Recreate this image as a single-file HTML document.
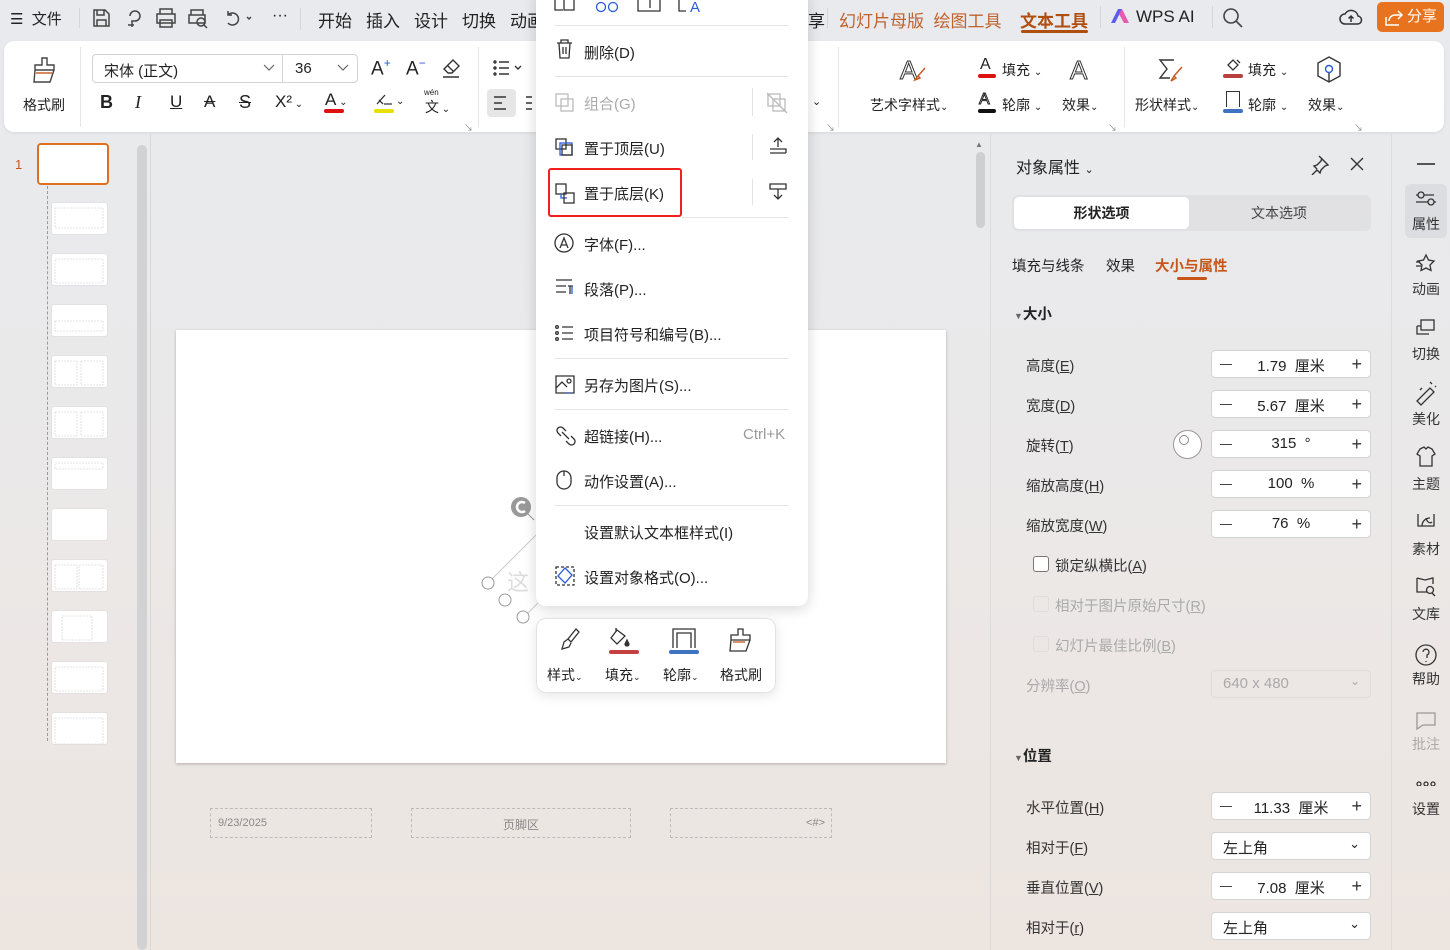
<!DOCTYPE html>
<html><head><meta charset="utf-8">
<style>
*{margin:0;padding:0;box-sizing:border-box}
body{width:1450px;height:950px;overflow:hidden;position:relative;font-family:"Liberation Sans","Noto Sans CJK SC",sans-serif;color:#222;background:linear-gradient(180deg,#e8eaee 0%,#eae9ea 40%,#ede5e0 100%)}
.a{position:absolute;white-space:nowrap}
.t{font-size:15px}
.s{font-size:14px}
.sep{position:absolute;height:1px;background:#e3e3e3}
.vd{position:absolute;width:1px;background:#d6d6d6}
.spin{position:absolute;left:1211px;width:160px;height:28px;background:#fff;border:1px solid #d4d4d4;border-radius:4px;font-size:15px}
.spin .m{position:absolute;left:8px;top:4px;width:12px;height:1px;background:#444;top:13px}
.spin .p{position:absolute;right:8px;top:3px;font-size:18px;line-height:20px;color:#333}
.spin .v{position:absolute;left:0;right:0;top:4px;text-align:center}
.lbl{position:absolute;left:1026px;font-size:14.5px;color:#333}
.cb{position:absolute;left:1033px;width:16px;height:16px;border:1.5px solid #777;border-radius:3px;background:#fff}
.rb{position:absolute;left:1405px;width:42px;text-align:center;font-size:14px;color:#333}
.thumb{position:absolute;left:52px;width:55px;height:31px;background:#fff;border-radius:2px;box-shadow:0 0 1px #bbb}
.tab{position:absolute;top:7px;font-size:17px}
</style></head><body>

<!-- top bar -->
<div class="a t" style="left:10px;top:8px">☰&nbsp; 文件</div>
<div class="vd" style="left:79px;top:8px;height:20px"></div>
<svg class="a" style="left:90px;top:6px" width="250" height="24" fill="none" stroke="#444" stroke-width="1.5">
<path d="M4 4h11l4 4v12H4z M7 4v5h7V4 M7 20v-6h9v6"/>
<path d="M40 10a5 5 0 1 1 5 5h-3v6 M38 19h6"/>
<path d="M70 8V3h12v5 M67 8h18v9H67z M70 14h12v7H70z"/>
<path d="M101 9V4h12v5 M99 9h16v8H99z"/><circle cx="111" cy="16" r="4"/><path d="M114 19l3 3"/>
<path d="M138 9a6 6 0 1 1 0 8 M138 5v4h4"/><path d="M157 11l2 2 2-2"/>
</svg>
<div class="a" style="left:272px;top:7px;font-size:16px">···</div>
<div class="vd" style="left:300px;top:8px;height:22px"></div>
<div class="tab" style="left:318px">开始</div>
<div class="tab" style="left:366px">插入</div>
<div class="tab" style="left:414px">设计</div>
<div class="tab" style="left:462px">切换</div>
<div class="tab" style="left:510px">动画</div>
<div class="a" style="left:808px;top:7px;font-size:17px">享</div>
<div class="vd" style="left:827px;top:8px;height:20px"></div>
<div class="a" style="left:839px;top:7px;font-size:17px;color:#c0622c">幻灯片母版&nbsp; 绘图工具</div>
<div class="a" style="left:1020px;top:7px;font-size:17px;color:#b04e10;font-weight:bold">文本工具</div>
<div class="a" style="left:1021px;top:30px;width:67px;height:3px;background:#b04e10;border-radius:2px"></div>
<div class="vd" style="left:1100px;top:6px;height:22px"></div>
<svg class="a" style="left:1110px;top:8px" width="20" height="16"><path d="M1 15L8 1h4l-7 14z" fill="#5b5cf0"/><path d="M9 6l3-5 7 14h-5z" fill="#e75ab0"/></svg>
<div class="a" style="left:1136px;top:7px;font-size:17px">WPS AI</div>
<div class="vd" style="left:1212px;top:6px;height:22px"></div>
<svg class="a" style="left:1222px;top:7px" width="22" height="22" fill="none" stroke="#444" stroke-width="1.6"><circle cx="9" cy="9" r="7"/><path d="M14 14l6 6"/></svg>
<svg class="a" style="left:1339px;top:6px" width="24" height="22" fill="none" stroke="#333" stroke-width="1.5"><path d="M6 18a5 5 0 0 1 0-10a7 7 0 0 1 13 2a4 4 0 0 1-1 8z"/><path d="M12 16v-6 M9.5 12.5L12 10l2.5 2.5"/></svg>
<div class="a" style="left:1377px;top:2px;width:67px;height:30px;background:#e8731f;border-radius:5px;color:#fff;font-size:15px;line-height:30px;padding-left:30px">分享</div>
<svg class="a" style="left:1384px;top:8px" width="20" height="18" fill="none" stroke="#fff" stroke-width="1.5"><path d="M14 3l4 4-4 4 M18 7h-7a6 6 0 0 0-6 6 M2 9v8h13"/></svg>

<!-- ribbon -->
<div class="a" style="left:4px;top:41px;width:1440px;height:91px;background:#fff;border-radius:10px;box-shadow:0 1px 3px rgba(0,0,0,.08)"></div>
<svg class="a" style="left:32px;top:56px" width="26" height="28" fill="none" stroke="#444" stroke-width="1.4"><path d="M10 2h5v7h7v5H3V9h7z M3 14l-1 12h16l4-12"/><path d="M4 17h16" stroke="#c8561a"/></svg>
<div class="a s" style="left:23px;top:95px">格式刷</div>
<div class="vd" style="left:80px;top:47px;height:80px;background:#e5e5e5"></div>
<div class="a" style="left:92px;top:54px;width:266px;height:29px;border:1px solid #d4d4d4;border-radius:4px"></div>
<div class="vd" style="left:282px;top:54px;height:29px"></div>
<div class="a t" style="left:104px;top:60px">宋体 (正文)</div>
<div class="a t" style="left:295px;top:60px">36</div>
<svg class="a" style="left:262px;top:62px" width="90" height="12" fill="none" stroke="#666" stroke-width="1.2"><path d="M2 3l5 5 5-5 M76 3l5 5 5-5"/></svg>
<div class="a" style="left:371px;top:56px;font-size:19px">A<sup style="color:#2a5bd7;font-size:12px">+</sup></div>
<div class="a" style="left:406px;top:56px;font-size:19px">A<sup style="color:#2a5bd7;font-size:12px">−</sup></div>
<svg class="a" style="left:440px;top:57px" width="22" height="22" fill="none" stroke="#333" stroke-width="1.4"><path d="M8 16l-4-4 9-9 6 6-7 7z M7 8l6 6 M3 20h16"/></svg>
<div class="a" style="left:100px;top:92px;font-size:18px;font-weight:bold">B</div>
<div class="a" style="left:135px;top:92px;font-size:18px;font-style:italic;font-family:'Liberation Serif',serif">I</div>
<div class="a" style="left:170px;top:92px;font-size:17px;text-decoration:underline">U</div>
<div class="a" style="left:204px;top:92px;font-size:17px;text-decoration:line-through">A</div>
<div class="a" style="left:239px;top:92px;font-size:18px;text-decoration:line-through">S</div>
<div class="a" style="left:275px;top:92px;font-size:17px">X²<span style="font-size:10px"> ⌄</span></div>
<div class="a" style="left:325px;top:90px;font-size:17px">A<span style="font-size:10px"> ⌄</span></div>
<div class="a" style="left:324px;top:109px;width:20px;height:4px;background:#e01010;border-radius:2px"></div>
<svg class="a" style="left:374px;top:90px" width="20" height="18" fill="none" stroke="#333" stroke-width="1.3"><path d="M3 14l8-9 M5 10l4 4 M10 14h8"/></svg>
<div class="a" style="left:396px;top:96px;font-size:10px">⌄</div>
<div class="a" style="left:374px;top:109px;width:20px;height:4px;background:#e8e000;border-radius:2px"></div>
<div class="a" style="left:424px;top:88px;font-size:8px">wén</div>
<div class="a" style="left:425px;top:97px;font-size:14px">文<span style="font-size:10px"> ⌄</span></div>
<div class="a" style="left:464px;top:121px;font-size:9px;color:#888">↘</div>
<div class="vd" style="left:478px;top:47px;height:80px;background:#e5e5e5"></div>
<svg class="a" style="left:493px;top:60px" width="40" height="16" fill="none" stroke="#333" stroke-width="1.4"><circle cx="2" cy="2" r="1"/><circle cx="2" cy="8" r="1"/><circle cx="2" cy="14" r="1"/><path d="M6 2h10 M6 8h10 M6 14h10 M22 6l3 3 3-3"/></svg>
<div class="a" style="left:487px;top:89px;width:29px;height:28px;background:#e6e6e6;border-radius:4px"></div>
<svg class="a" style="left:492px;top:95px" width="40" height="16" fill="none" stroke="#333" stroke-width="1.4"><path d="M2 2h12 M2 8h8 M2 14h12 M34 2h6 M34 8h6 M34 14h6"/></svg>

<div class="a" style="left:812px;top:95px;font-size:11px">⌄</div>
<div class="a" style="left:826px;top:121px;font-size:9px;color:#888">↘</div>
<div class="vd" style="left:838px;top:47px;height:80px;background:#e5e5e5"></div>
<div class="a" style="left:900px;top:55px;font-size:26px;font-family:'Liberation Sans';-webkit-text-stroke:1px #333;color:#fff">A</div>
<svg class="a" style="left:913px;top:66px" width="14" height="16" fill="none" stroke="#c8561a" stroke-width="1.4"><path d="M12 2L5 10 M2 14l3-4 2 2z"/></svg>
<div class="a s" style="left:870px;top:95px">艺术字样式<span style="font-size:10px">⌄</span></div>
<div class="a" style="left:980px;top:56px;font-size:16px">A</div>
<div class="a" style="left:978px;top:74px;width:18px;height:4px;background:#e01010;border-radius:2px"></div>
<div class="a s" style="left:1002px;top:60px">填充 <span style="font-size:10px">⌄</span></div>
<div class="a" style="left:979px;top:91px;font-size:16px;-webkit-text-stroke:1px #222;color:#fff">A</div>
<div class="a" style="left:978px;top:109px;width:18px;height:4px;background:#111;border-radius:2px"></div>
<div class="a s" style="left:1002px;top:95px">轮廓 <span style="font-size:10px">⌄</span></div>
<div class="a" style="left:1070px;top:55px;font-size:26px;-webkit-text-stroke:1px #333;color:#fff">A</div>
<div class="a s" style="left:1062px;top:95px">效果<span style="font-size:10px">⌄</span></div>
<div class="a" style="left:1108px;top:121px;font-size:9px;color:#888">↘</div>
<div class="vd" style="left:1124px;top:47px;height:80px;background:#e5e5e5"></div>
<svg class="a" style="left:1158px;top:57px" width="28" height="26" fill="none" stroke="#333" stroke-width="1.4"><path d="M16 3H2l7 9-7 9h10"/><path d="M24 10l-8 9 M13 24l3-5 2 2z" stroke="#c8561a"/></svg>
<div class="a s" style="left:1135px;top:95px">形状样式<span style="font-size:10px">⌄</span></div>
<svg class="a" style="left:1223px;top:57px" width="22" height="16" fill="none" stroke="#333" stroke-width="1.3"><path d="M5 8l5-5 5 5-5 5z M14 3l3 3"/></svg>
<div class="a" style="left:1223px;top:74px;width:20px;height:4px;background:#b84040;border-radius:2px"></div>
<div class="a s" style="left:1248px;top:60px">填充 <span style="font-size:10px">⌄</span></div>
<div class="a" style="left:1226px;top:91px;width:14px;height:16px;border:1.5px solid #333;border-bottom:none"></div>
<div class="a" style="left:1223px;top:109px;width:20px;height:4px;background:#3f72c0;border-radius:2px"></div>
<div class="a s" style="left:1248px;top:95px">轮廓 <span style="font-size:10px">⌄</span></div>
<svg class="a" style="left:1316px;top:55px" width="26" height="30" fill="none" stroke="#333" stroke-width="1.4"><path d="M13 2l11 6v13l-11 6-11-6V8z"/><circle cx="13" cy="14" r="3.5" stroke="#2a5bd7"/><path d="M13 18v9"/></svg>
<div class="a s" style="left:1308px;top:95px">效果<span style="font-size:10px">⌄</span></div>
<div class="a" style="left:1354px;top:121px;font-size:9px;color:#888">↘</div>

<!-- left pane -->
<div class="a" style="left:15px;top:157px;font-size:13px;color:#c8561a">1</div>
<div class="a" style="left:37px;top:143px;width:72px;height:42px;background:#fff;border:2px solid #e07020;border-radius:4px"></div>
<div class="a" style="left:47px;top:186px;height:555px;border-left:1px dashed #999"></div>
<div class="thumb" style="top:203px"></div><div class="thumb" style="top:254px"></div><div class="thumb" style="top:305px"></div>
<div class="thumb" style="top:356px"></div><div class="thumb" style="top:407px"></div><div class="thumb" style="top:458px"></div>
<div class="thumb" style="top:509px"></div><div class="thumb" style="top:560px"></div><div class="thumb" style="top:611px"></div>
<div class="thumb" style="top:662px"></div><div class="thumb" style="top:713px"></div>
<svg class="a" style="left:52px;top:203px" width="56" height="545" fill="none" stroke="#ccc" stroke-width="0.6" stroke-dasharray="2 1">
<rect x="3" y="5" width="48" height="20"/><rect x="3" y="56" width="48" height="24"/><rect x="3" y="118" width="48" height="10"/>
<rect x="3" y="158" width="22" height="24"/><rect x="29" y="158" width="22" height="24"/>
<rect x="3" y="209" width="22" height="24"/><rect x="29" y="209" width="22" height="24"/>
<rect x="3" y="260" width="48" height="6"/><rect x="3" y="362" width="22" height="24"/><rect x="27" y="362" width="24" height="24"/>
<rect x="10" y="413" width="30" height="24"/><rect x="3" y="464" width="48" height="24"/><rect x="3" y="515" width="48" height="26"/>
</svg>
<div class="a" style="left:137px;top:145px;width:10px;height:805px;background:#d2d2d4;border-radius:5px"></div>
<div class="vd" style="left:150px;top:134px;height:816px;background:#d8d8d8"></div>

<!-- slide -->
<div class="a" style="left:176px;top:330px;width:770px;height:433px;background:#fff;box-shadow:0 1px 3px rgba(0,0,0,.25)"></div>
<svg class="a" style="left:475px;top:490px" width="70" height="140" fill="none" stroke="#999" stroke-width="1">
<path d="M13 93l50-50 M48 128l15-15" stroke="#ccc"/>
<circle cx="46" cy="17" r="10" fill="#999" stroke="none"/><path d="M50 13a5 5 0 1 0 0 8" stroke="#fff" stroke-width="2.5"/>
<path d="M53 24l6 6"/>
<circle cx="13" cy="93" r="6" fill="#fff"/><circle cx="30" cy="110" r="6" fill="#fff"/><circle cx="48" cy="127" r="6" fill="#fff"/>
<text x="32" y="100" font-size="22" fill="#ddd" stroke="none" font-family="Noto Sans CJK SC">这</text>
</svg>
<div class="a" style="left:210px;top:808px;width:162px;height:30px;border:1px dashed #bbb;font-size:11px;color:#888;padding:8px 0 0 7px">9/23/2025</div>
<div class="a" style="left:411px;top:808px;width:220px;height:30px;border:1px dashed #bbb;font-size:12px;color:#888;text-align:center;padding-top:7px">页脚区</div>
<div class="a" style="left:670px;top:808px;width:162px;height:30px;border:1px dashed #bbb;font-size:11px;color:#888;text-align:right;padding:8px 6px 0 0">&lt;#&gt;</div>
<div class="a" style="left:975px;top:140px;font-size:8px;color:#777">▲</div>
<div class="a" style="left:976px;top:152px;width:9px;height:76px;background:#cfcfd1;border-radius:5px"></div>

<!-- context menu -->
<div class="a" style="left:536px;top:-10px;width:272px;height:616px;background:#fff;border-radius:10px;box-shadow:0 3px 14px rgba(0,0,0,.16)"></div>
<svg class="a" style="left:552px;top:0" width="160" height="14" fill="none" stroke="#333" stroke-width="1.3"><path d="M3 0v10h8 M12 0v10h10V0" /><circle cx="49" cy="7" r="4.5" stroke="#2a5bd7"/><circle cx="61" cy="7" r="4.5" stroke="#2a5bd7"/><path d="M86 0v11h22V0 M98 0v8" /><path d="M127 0v11h7" /><text x="138" y="12" font-size="15" fill="#2a5bd7" stroke="none" font-family="Liberation Sans">A</text></svg>
<div class="sep" style="left:555px;top:25px;width:233px"></div>
<svg class="a" style="left:553px;top:38px" width="240" height="560" fill="none" stroke="#333" stroke-width="1.3">
<path d="M4 5h15 M8 5V2h7v3 M6 5l1 15h9l1-15 M10 9v7 M13 9v7"/>
<g stroke="#bbb"><rect x="3" y="56" width="12" height="12"/><rect x="8" y="61" width="12" height="12"/><rect x="215" y="56" width="12" height="12"/><rect x="220" y="61" width="12" height="12"/><path d="M214 55l20 20"/></g>
<rect x="3" y="101" width="10" height="10"/><rect x="7" y="105" width="12" height="12" stroke="#2a5bd7"/><rect x="9" y="107" width="10" height="10"/>
<path d="M217 115h16 M217 111h16v4 M225 109v-9 M221 104l4-4 4 4"/>
<rect x="3" y="146" width="10" height="10"/><path d="M8 156v4h6" stroke="#2a5bd7"/><rect x="11" y="155" width="10" height="10"/>
<path d="M217 146h16v5h-16z M225 151v10 M221 157l4 4 4-4"/>
<circle cx="11" cy="205" r="9"/><path d="M7 210l4-10 4 10 M8.5 207h5"/>
<path d="M3 242h16 M3 248h10 M3 254h10 M15 248h5 M17 248v8" /><path d="M19 248v8" stroke="#2a5bd7"/>
<circle cx="4" cy="289" r="1.3"/><circle cx="4" cy="295" r="1.3"/><circle cx="4" cy="301" r="1.3"/><path d="M9 289h11 M9 295h11 M9 301h11"/>
<path d="M3 355V338h18v17z M3 350l6-6 5 5"/><circle cx="16" cy="343" r="2"/><path d="M12 355h9" stroke="#2a5bd7" stroke-dasharray="1.5 1.5"/>
<path d="M8 398l-3-3a3.5 3.5 0 0 1 5-5l3 3 M13 403l3 3a3.5 3.5 0 0 0 5-5l-3-3 M9 394l7 7"/>
<rect x="4" y="433" width="14" height="18" rx="7"/><path d="M11 433v5"/>
<rect x="3" y="529" width="18" height="18" stroke-dasharray="3 2"/><path d="M12 530l7 7-7 8-7-7z" stroke="#2a5bd7"/>
</svg>
<div class="a t" style="left:584px;top:42px">删除(D)</div>
<div class="sep" style="left:555px;top:76px;width:233px"></div>
<div class="a t" style="left:584px;top:93px;color:#aaa">组合(G)</div>
<div class="vd" style="left:752px;top:88px;height:28px;background:#e3e3e3"></div>
<div class="a t" style="left:584px;top:138px">置于顶层(U)</div>
<div class="vd" style="left:752px;top:134px;height:26px;background:#e3e3e3"></div>
<div class="a t" style="left:584px;top:183px">置于底层(K)</div>
<div class="vd" style="left:752px;top:179px;height:26px;background:#e3e3e3"></div>
<div class="a" style="left:548px;top:168px;width:134px;height:49px;border:2.5px solid #f0201a;border-radius:3px"></div>
<div class="sep" style="left:682px;top:217px;width:106px"></div>
<div class="a t" style="left:584px;top:234px">字体(F)...</div>
<div class="a t" style="left:584px;top:279px">段落(P)...</div>
<div class="a t" style="left:584px;top:324px">项目符号和编号(B)...</div>
<div class="sep" style="left:555px;top:358px;width:233px"></div>
<div class="a t" style="left:584px;top:375px">另存为图片(S)...</div>
<div class="sep" style="left:555px;top:409px;width:233px"></div>
<div class="a t" style="left:584px;top:426px">超链接(H)...</div>
<div class="a t" style="left:743px;top:426px;color:#999">Ctrl+K</div>
<div class="a t" style="left:584px;top:471px">动作设置(A)...</div>
<div class="sep" style="left:555px;top:505px;width:233px"></div>
<div class="a t" style="left:584px;top:522px">设置默认文本框样式(I)</div>
<div class="a t" style="left:584px;top:567px">设置对象格式(O)...</div>

<!-- mini toolbar -->
<div class="a" style="left:536px;top:618px;width:240px;height:75px;background:#fff;border-radius:10px;border:1px solid #e3e3e3;box-shadow:0 3px 12px rgba(0,0,0,.1)"></div>
<svg class="a" style="left:552px;top:626px" width="210" height="30" fill="none" stroke="#333" stroke-width="1.3">
<path d="M24 3l-8 10 3 3 8-10z M16 13l-4 3-2 7 7-2 2-4"/>
<path d="M65 4l-6 8 6 6 8-8z M64 2v4"/><path d="M75 14l2 4a2 2 0 0 1-4 0z" fill="#333"/>
<rect x="57" y="24" width="30" height="4" rx="2" fill="#c54040" stroke="none"/>
<path d="M121 22V3h22v19 M125 22V7h14v15"/><rect x="117" y="24" width="30" height="4" rx="2" fill="#3f72c0" stroke="none"/>
<path d="M186 3h5v6h7v5h-19V9h7z M179 14l-1 11h16l4-11"/><path d="M181 16h12" stroke="#c8561a"/>
</svg>
<div class="a s" style="left:547px;top:665px">样式<span style="font-size:9px">⌄</span></div>
<div class="a s" style="left:605px;top:665px">填充<span style="font-size:9px">⌄</span></div>
<div class="a s" style="left:663px;top:665px">轮廓<span style="font-size:9px">⌄</span></div>
<div class="a s" style="left:720px;top:665px">格式刷</div>

<!-- right panel -->
<div class="vd" style="left:990px;top:134px;height:816px;background:#dcdcdc"></div>
<div class="a" style="left:1016px;top:154px;font-size:16px">对象属性 <span style="font-size:11px">⌄</span></div>
<svg class="a" style="left:1310px;top:153px" width="60" height="22" fill="none" stroke="#333" stroke-width="1.4"><path d="M9 3l9 9-3 1-4 4-1 3-3-3-5 5 M7 16l-3-3 3-1 4-4 1-3"/><path d="M41 5l12 12 M53 5L41 17"/></svg>
<div class="a" style="left:1012px;top:195px;width:359px;height:36px;background:#e1e1e4;border-radius:6px"></div>
<div class="a" style="left:1014px;top:197px;width:175px;height:32px;background:#fff;border-radius:5px;text-align:center;line-height:32px;font-size:14px;font-weight:bold">形状选项</div>
<div class="a" style="left:1189px;top:197px;width:180px;height:32px;text-align:center;line-height:32px;font-size:14px;color:#444">文本选项</div>
<div class="a" style="left:1012px;top:255px;font-size:14.5px">填充与线条</div>
<div class="a" style="left:1106px;top:255px;font-size:14.5px">效果</div>
<div class="a" style="left:1155px;top:255px;font-size:14.5px;color:#c8561a;font-weight:bold">大小与属性</div>
<div class="a" style="left:1177px;top:277px;width:30px;height:3px;background:#c8561a;border-radius:2px"></div>
<div class="a" style="left:1014px;top:303px;font-size:14.5px;font-weight:bold"><span style="font-size:9px;color:#666">▼</span>大小</div>

<div class="lbl" style="top:355px">高度(<u>E</u>)</div>
<div class="spin" style="top:350px"><div class="m"></div><div class="v">1.79&nbsp; 厘米</div><div class="p">+</div></div>
<div class="lbl" style="top:395px">宽度(<u>D</u>)</div>
<div class="spin" style="top:390px"><div class="m"></div><div class="v">5.67&nbsp; 厘米</div><div class="p">+</div></div>
<div class="lbl" style="top:435px">旋转(<u>T</u>)</div>
<div class="a" style="left:1173px;top:430px;width:29px;height:29px;border:1.5px solid #999;border-radius:50%;background:#fff"></div>
<div class="a" style="left:1179px;top:435px;width:10px;height:10px;border:1px solid #888;border-radius:50%"></div>
<div class="spin" style="top:430px"><div class="m"></div><div class="v">315&nbsp; °</div><div class="p">+</div></div>
<div class="lbl" style="top:475px">缩放高度(<u>H</u>)</div>
<div class="spin" style="top:470px"><div class="m"></div><div class="v">100&nbsp; %</div><div class="p">+</div></div>
<div class="lbl" style="top:515px">缩放宽度(<u>W</u>)</div>
<div class="spin" style="top:510px"><div class="m"></div><div class="v">76&nbsp; %</div><div class="p">+</div></div>
<div class="cb" style="top:556px"></div><div class="a" style="left:1055px;top:555px;font-size:14.5px;color:#333">锁定纵横比(<u>A</u>)</div>
<div class="cb" style="top:596px;border-color:#ddd;background:none"></div><div class="a" style="left:1055px;top:595px;font-size:14.5px;color:#aaa">相对于图片原始尺寸(<u>R</u>)</div>
<div class="cb" style="top:636px;border-color:#ddd;background:none"></div><div class="a" style="left:1055px;top:635px;font-size:14.5px;color:#aaa">幻灯片最佳比例(<u>B</u>)</div>
<div class="lbl" style="top:675px;color:#aaa">分辨率(<u>O</u>)</div>
<div class="spin" style="top:670px;background:none;border-color:#ddd;color:#aaa"><div class="a" style="left:11px;top:4px">640 x 480</div><div class="a" style="right:10px;top:3px;font-size:12px">⌄</div></div>
<div class="a" style="left:1014px;top:745px;font-size:14.5px;font-weight:bold"><span style="font-size:9px;color:#666">▼</span>位置</div>
<div class="lbl" style="top:797px">水平位置(<u>H</u>)</div>
<div class="spin" style="top:792px"><div class="m"></div><div class="v">11.33&nbsp; 厘米</div><div class="p">+</div></div>
<div class="lbl" style="top:837px">相对于(<u>F</u>)</div>
<div class="spin" style="top:832px"><div class="a" style="left:11px;top:4px">左上角</div><div class="a" style="right:10px;top:3px;font-size:13px">⌄</div></div>
<div class="lbl" style="top:877px">垂直位置(<u>V</u>)</div>
<div class="spin" style="top:872px"><div class="m"></div><div class="v">7.08&nbsp; 厘米</div><div class="p">+</div></div>
<div class="lbl" style="top:917px">相对于(<u>r</u>)</div>
<div class="spin" style="top:912px"><div class="a" style="left:11px;top:4px">左上角</div><div class="a" style="right:10px;top:3px;font-size:13px">⌄</div></div>

<!-- right icon bar -->
<div class="vd" style="left:1391px;top:134px;height:816px;background:#dcdcdc"></div>
<div class="a" style="left:1417px;top:163px;width:18px;height:1.5px;background:#555"></div>
<div class="a" style="left:1405px;top:184px;width:42px;height:54px;background:#dcdde1;border-radius:6px"></div>
<svg class="a" style="left:1412px;top:186px" width="30" height="600" fill="none" stroke="#333" stroke-width="1.3">
<circle cx="9" cy="9" r="3"/><path d="M12 9h10 M4 9h2"/><circle cx="19" cy="16" r="3"/><path d="M4 16h12 M22 16h2"/>
<path d="M14 69l2.5 5 5.5 1-4 4 1 5.5-5-2.5-5 2.5 1-5.5-4-4 5.5-1z M4 80h5 M4 76h4"/>
<rect x="9" y="134" width="13" height="10"/><path d="M5 140v8h12 M5 140h4"/>
<path d="M5 215l13-13 4 4-13 13z M18 196l2 2 M23 200l1 1 M8 204l2-2"/>
<path d="M8 263l4-2 2 2 2-2 4 2 3 5-3 2v10H8v-10l-3-2z"/>
<path d="M6 328v12h16v-12 M10 340c0-5 4-8 8-8 M14 332c1 4 4 6 6 4"/>
<path d="M5 392v14h10 M5 392l8 2 8-2v6"/><circle cx="18" cy="404" r="3.5"/><path d="M20 407l3 3"/>
<circle cx="14" cy="469" r="10"/><path d="M11 466a3 3 0 1 1 4 3v3 M14 475v1"/>
<path d="M5 527h18v12h-12l-6 4z" stroke="#999"/>
<circle cx="7" cy="598" r="2"/><circle cx="14" cy="598" r="2"/><circle cx="21" cy="598" r="2"/>
</svg>
<div class="rb" style="top:214px">属性</div>
<div class="rb" style="top:279px">动画</div>
<div class="rb" style="top:344px">切换</div>
<div class="rb" style="top:409px">美化</div>
<div class="rb" style="top:474px">主题</div>
<div class="rb" style="top:539px">素材</div>
<div class="rb" style="top:604px">文库</div>
<div class="rb" style="top:669px">帮助</div>
<div class="rb" style="top:734px;color:#aaa">批注</div>
<div class="rb" style="top:799px">设置</div>
</body></html>
